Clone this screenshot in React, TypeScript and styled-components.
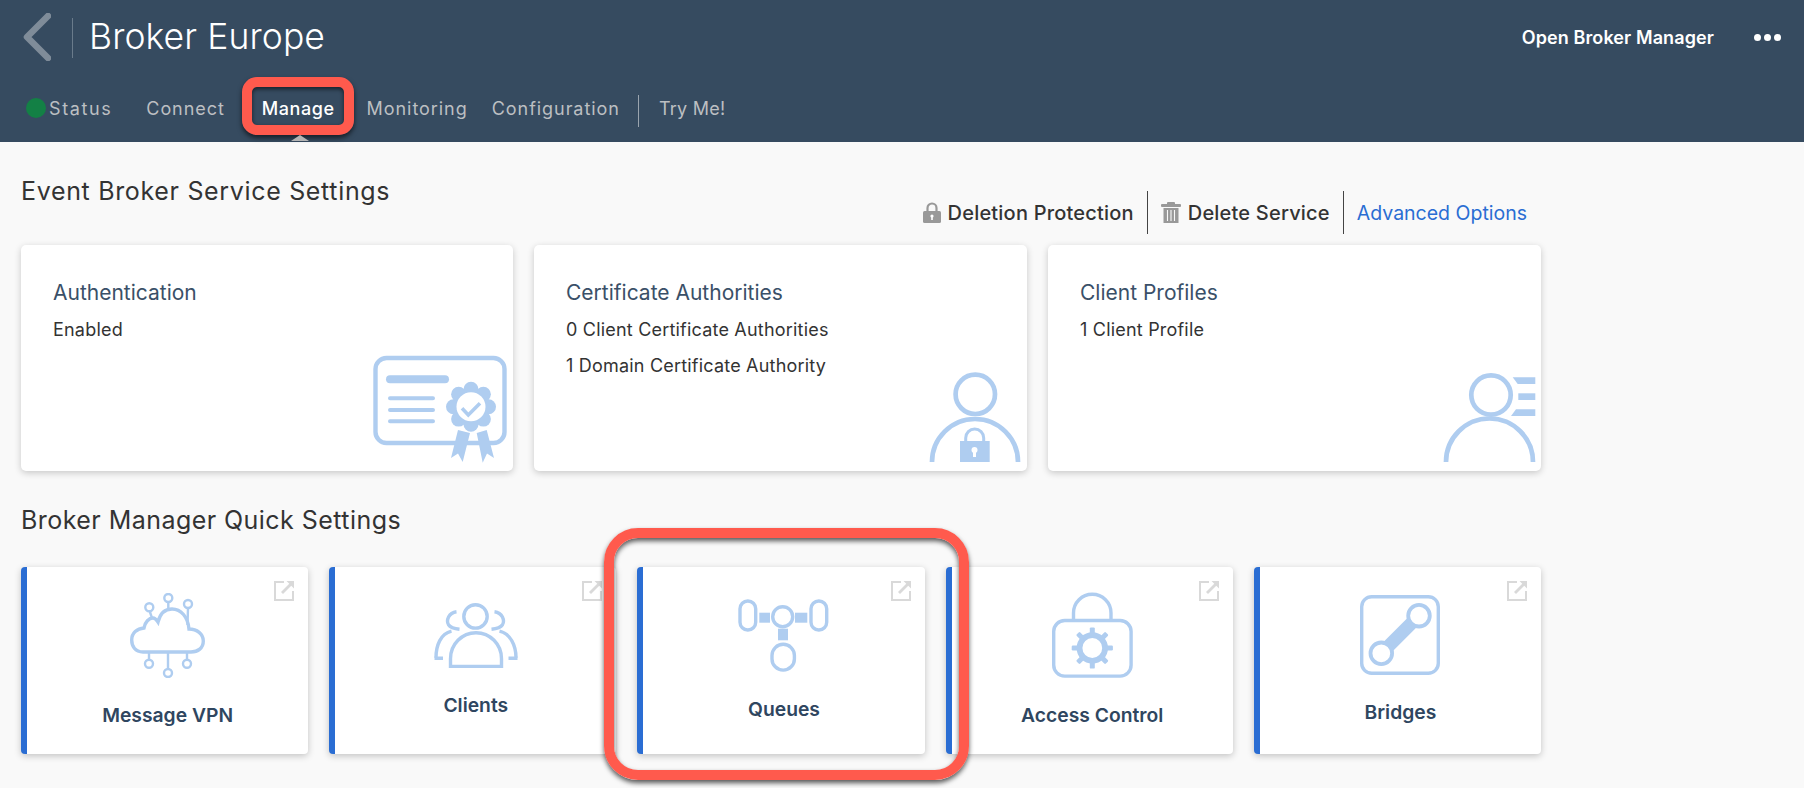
import React from 'react'
import styled, { createGlobalStyle } from 'styled-components'

const ICON = '#afcdf0'
const FONT = `Inter, "Noto Sans", "Liberation Sans", sans-serif`

const GlobalStyle = createGlobalStyle`
  html, body {
    margin: 0;
    padding: 0;
    background: #f9f9f9;
    font-family: ${FONT};
    overflow: hidden;
  }
`

const Page = styled.div`
  width: 1804px;
  height: 788px;
  overflow: hidden;
`

const Header = styled.header`
  height: 142px;
  box-sizing: border-box;
  background: #364b60;
  padding: 13px 23px 0 23px;
`

const TopRow = styled.div`
  display: flex;
  align-items: flex-start;
  height: 78px;
`

const BackButton = styled.svg`
  width: 28px;
  height: 48px;
  display: block;
`

const TitleDivider = styled.div`
  width: 1px;
  height: 40px;
  margin: 5px 17px 0 21px;
  background: #6a7b8b;
`

const Title = styled.h1`
  margin: 0;
  font-size: 35.5px;
  line-height: 40px;
  margin-top: 4px;
  margin-left: -1px;
  font-weight: 300;
  color: #fff;
  letter-spacing: 0.1px;
`

const OpenManager = styled.a`
  margin-left: auto;
  margin-top: 14px;
  font-size: 18px;
  line-height: 22px;
  font-weight: 600;
  letter-spacing: 0.1px;
  color: #fff;
`

const MoreDots = styled.div`
  display: flex;
  gap: 3px;
  margin: 21px 0 0 40px;
  span {
    width: 7px;
    height: 7px;
    border-radius: 50%;
    background: #fff;
  }
`

const TabRow = styled.nav`
  display: flex;
  align-items: center;
  height: 26px;
  margin-top: 5px;
`

const StatusDot = styled.span`
  width: 20px;
  height: 20px;
  margin: 0 3px 3px 3px;
  border-radius: 50%;
  background: #138045;
`

const Tab = styled.a<{ $active?: boolean; $left: number; $spacing?: number }>`
  position: relative;
  margin-left: ${(p) => p.$left}px;
  font-size: 18px;
  line-height: 26px;
  font-weight: ${(p) => (p.$active ? 500 : 400)};
  letter-spacing: ${(p) => p.$spacing ?? 0.95}px;
  color: ${(p) => (p.$active ? '#fff' : '#bcbfc2')};
`

const TabHighlight = styled.span`
  position: absolute;
  left: -20px;
  right: -19px;
  top: -19px;
  bottom: -13px;
  box-sizing: border-box;
  border: 10px solid #ff5a4d;
  border-radius: 15px;
  box-shadow: 0 3px 5px rgba(0, 0, 0, 0.6), inset 0 2px 4px rgba(0, 0, 0, 0.6);
`

const TabCaret = styled.span`
  position: absolute;
  left: 29px;
  top: 39px;
  width: 0;
  height: 0;
  border-left: 9px solid transparent;
  border-right: 9px solid transparent;
  border-bottom: 6px solid #b4b4b4;
`

const TabDivider = styled.span`
  width: 1px;
  height: 32px;
  margin: 4px 0 0 18px;
  background: #9aa4ae;
`

const Main = styled.main`
  width: 1520px;
  margin-left: 21px;
`

const SectionHead = styled.div`
  display: flex;
  justify-content: space-between;
  align-items: flex-start;
  padding: 34px 14px 11px 0;
`

const SectionTitle = styled.h2`
  margin: 0;
  font-size: 25px;
  line-height: 30px;
  font-weight: 400;
  letter-spacing: 0.67px;
  color: #333;
`

const QuickTitle = styled(SectionTitle)`
  margin: 34px 0 32px;
  letter-spacing: 0.45px;
`

const Actions = styled.div`
  display: flex;
  align-items: center;
  height: 43px;
  margin-top: 15px;
`

const Action = styled.a`
  display: flex;
  align-items: center;
  gap: 7px;
  font-size: 20px;
  font-weight: 500;
  letter-spacing: 0.2px;
  color: #333;
`

const ActionDivider = styled.span`
  width: 1px;
  height: 43px;
  margin: 0 13px;
  background: #444;
`

const AdvancedLink = styled.a`
  font-size: 19.5px;
  color: #2a6dd3;
`

const SettingsGrid = styled.div`
  display: grid;
  grid-template-columns: 492px 493px 493px;
  gap: 21px;
`

const SettingCard = styled.div`
  position: relative;
  height: 226px;
  box-sizing: border-box;
  padding: 34px 32px 0;
  background: #fff;
  border-radius: 5px;
  box-shadow: 0 2px 7px rgba(0, 0, 0, 0.2);
`

const CardTitle = styled.div`
  font-size: 21px;
  line-height: 28px;
  margin-bottom: 5px;
  color: #3a5068;
`

const CardLine = styled.div`
  font-size: 18px;
  line-height: 36px;
  letter-spacing: 0.2px;
  color: #333;
`

const CardArt = styled.svg<{ $right: number; $bottom: number }>`
  position: absolute;
  right: ${(p) => p.$right}px;
  bottom: ${(p) => p.$bottom}px;
  display: block;
`

const QuickGrid = styled.div`
  display: grid;
  grid-template-columns: repeat(5, 1fr);
  gap: 21px;
`

const QuickCard = styled.div`
  position: relative;
  height: 187px;
  box-sizing: border-box;
  display: flex;
  flex-direction: column;
  align-items: center;
  justify-content: center;
  gap: 23px;
  background: #fff;
  border-left: 6px solid #2a6dd3;
  border-radius: 4px;
  box-shadow: 0 2px 7px rgba(0, 0, 0, 0.22);
`

const QuickLabel = styled.div`
  font-size: 19.3px;
  line-height: 28px;
  font-weight: 600;
  color: #2f4660;
`

const QuickIcon = styled.svg`
  display: block;
`

const ExternalIcon = styled.svg`
  position: absolute;
  top: 14px;
  right: 14px;
  width: 20px;
  height: 20px;
`

const CardHighlight = styled.div`
  position: absolute;
  left: -39px;
  right: -44px;
  top: -39px;
  bottom: -26px;
  z-index: 2;
  box-sizing: border-box;
  border: 10px solid #ff5a4d;
  border-radius: 34px;
  box-shadow: 0 3px 5px rgba(0, 0, 0, 0.65), inset 0 3px 5px rgba(0, 0, 0, 0.65);
`

const External = () => (
  <ExternalIcon viewBox="0 0 20 20" fill="none">
    <path d="M10 1H1V19H19V10" stroke="#d9d9d9" strokeWidth="2" />
    <path d="M8 12L17 3" stroke="#d9d9d9" strokeWidth="2.8" />
    <path d="M12.5 0H20V7.5Z" fill="#d9d9d9" />
  </ExternalIcon>
)

const SmallLock = () => (
  <svg width="18" height="21" viewBox="0 0 18 21">
    <path d="M4.5 10V6a4.5 4.5 0 0 1 9 0v4" fill="none" stroke="#999" strokeWidth="2.2" />
    <rect x="0" y="9" width="18" height="12" rx="1.5" fill="#999" />
    <circle cx="9" cy="14" r="1.6" fill="#fff" />
    <rect x="8.2" y="14" width="1.6" height="4" fill="#fff" />
  </svg>
)

const SmallTrash = () => (
  <svg width="20" height="21" viewBox="0 0 20 21">
    <rect x="0" y="2" width="20" height="3" rx="1" fill="#999" />
    <rect x="6" y="0" width="8" height="3" rx="1" fill="#999" />
    <path d="M2.5 6H17.5V21H2.5Z" fill="#999" />
    <path d="M6.5 8V19M10 8V19M13.5 8V19" stroke="#f9f9f9" strokeWidth="1.1" />
  </svg>
)

const CertificateArt = () => (
  <CardArt $right={6} $bottom={8} width="134" height="108" viewBox="33 15 134 108">
    <rect x="35.5" y="18" width="129" height="85" rx="11" fill="none" stroke={ICON} strokeWidth="4.4" />
    <rect x="46" y="35.3" width="63" height="8" rx="4" fill={ICON} />
    <path d="M50 58.3H93M50 70H93M50 81.3H93" stroke={ICON} strokeWidth="4" strokeLinecap="round" />
    <circle cx="131" cy="66.7" r="30" fill="#fff" />
    <path d="M118 90L130 93L122.7 122L118 113.5L111 118Z" fill={ICON} />
    <path d="M136.7 93L146.7 90L154 118L147 113.5L142.7 122.7Z" fill={ICON} />
    <circle cx="131" cy="66.7" r="18" fill={ICON} />
    {[0, 45, 90, 135, 180, 225, 270, 315].map((a) => (
      <circle key={a} cx={131 + 17.5 * Math.cos((a * Math.PI) / 180)} cy={66.7 + 17.5 * Math.sin((a * Math.PI) / 180)} r="7.5" fill={ICON} />
    ))}
    <circle cx="131" cy="66.7" r="14.5" fill="#fff" />
    <path d="M122 68.3L128.3 75L140 63.3" fill="none" stroke={ICON} strokeWidth="3.6" />
  </CardArt>
)

const UserLockArt = () => (
  <CardArt $right={5} $bottom={8} width="94" height="93" viewBox="27 10 94 93">
    <circle cx="74.3" cy="34.3" r="19.7" fill="none" stroke={ICON} strokeWidth="4.7" />
    <path d="M31 102A43 43 0 0 1 117 102" fill="none" stroke={ICON} strokeWidth="4.7" />
    <path d="M64.7 82V78A9 9 0 0 1 82.7 78V82" fill="none" stroke={ICON} strokeWidth="3" />
    <rect x="59" y="81" width="29.7" height="21" fill={ICON} />
    <circle cx="73.5" cy="90" r="3" fill="#fff" />
    <rect x="72" y="90" width="3" height="7" fill="#fff" />
  </CardArt>
)

const UserListArt = () => (
  <CardArt $right={4} $bottom={7} width="96" height="92" viewBox="20 12 96 92">
    <circle cx="70" cy="35" r="19.7" fill="none" stroke={ICON} strokeWidth="4.7" />
    <path d="M25 102A43.5 43.5 0 0 1 112 102" fill="none" stroke={ICON} strokeWidth="4.7" />
    <path d="M91.7 17.3H114.3V24H96.7Z" fill={ICON} />
    <path d="M97.3 33.3H114.3V40H97.3Z" fill={ICON} />
    <path d="M95 49.3H114.3V56H90Z" fill={ICON} />
  </CardArt>
)

const CloudIcon = () => (
  <QuickIcon width="75" height="85" viewBox="130 42 75 85" fill="none" stroke={ICON} strokeWidth="3.4">
    <path d="M143 101C135 101 131.7 95 131.7 89C131.7 82 137 77.5 144 77C145 71 149 67 153 67C155 67 156 68 158 71C160 63 165 58 172 58C181 58 188 66 189 78C197 78 203.3 83 203.3 90C203.3 97 198 101 191 101Z" />
    <g strokeWidth="2.4">
      <circle cx="168.3" cy="47" r="4" />
      <circle cx="149.3" cy="56.3" r="4" />
      <circle cx="188" cy="53" r="4" />
      <circle cx="149" cy="112.7" r="4" />
      <circle cx="168" cy="122" r="4" />
      <circle cx="187" cy="112.7" r="4" />
      <path d="M168.3 51V58M149.8 60.5L152 67M188 57L187.5 74M149 101V108.5M168 101V118M187 101V108.5" />
    </g>
  </QuickIcon>
)

const ClientsIcon = () => (
  <QuickIcon width="84" height="65" viewBox="113.5 52.3 84 65" fill="none" stroke={ICON} strokeWidth="3.4">
    <circle cx="155" cy="65.7" r="11.7" />
    <path d="M130 115.7V108A25.5 26 0 0 1 181 108V115.7Z" />
    <path d="M136 61C128 62 125.5 70 128 74C130 77 134 78 139 78.5" />
    <path d="M174 61C182 62 184.5 70 182 74C180 77 176 78 171 78.5" />
    <path d="M131 80.5C120 83 115.5 95 115.5 107" />
    <path d="M179 80.5C190 83 195.5 95 195.5 107" />
    <path d="M114 107.5H122.5M188 107.5H197" />
  </QuickIcon>
)

const QueuesIcon = () => (
  <QuickIcon width="91" height="73" viewBox="138 78 91 73" fill="none" stroke={ICON} strokeWidth="3.4">
    <rect x="140" y="80" width="15.7" height="29" rx="7.8" />
    <rect x="211" y="80" width="15.7" height="29" rx="7.8" />
    <circle cx="182.7" cy="95.7" r="10" />
    <rect x="172" y="123.3" width="22.4" height="25.8" rx="11.2" />
    <g fill={ICON} stroke="none">
      <rect x="159.3" y="91.7" width="10.7" height="10" />
      <rect x="195" y="91.7" width="12.3" height="10" />
      <rect x="178" y="107.7" width="10" height="11.6" />
    </g>
  </QuickIcon>
)

const AccessIcon = () => (
  <QuickIcon width="81" height="86" viewBox="111 41 81 86" fill="none" stroke={ICON} strokeWidth="3.4">
    <rect x="112.7" y="69.5" width="77.4" height="55.6" rx="11" />
    <path d="M132.5 69V62A18.7 18.7 0 0 1 170 62V69" />
    <circle cx="151.3" cy="97" r="12.8" strokeWidth="5.8" />
    {[0, 45, 90, 135, 180, 225, 270, 315].map((a) => (
      <rect key={a} x="148.8" y="76.4" width="5" height="8" rx="1.2" fill={ICON} stroke="none" transform={`rotate(${a} 151.3 97)`} />
    ))}
  </QuickIcon>
)

const BridgesIcon = () => (
  <QuickIcon width="80" height="80" viewBox="121 45 80 80" fill="none" stroke={ICON} strokeWidth="3.4">
    <rect x="122.7" y="46.7" width="76.6" height="76.6" rx="10" />
    <path d="M180 65.7L142.3 103.3" strokeWidth="13" />
    <circle cx="180" cy="65.7" r="10.8" fill="#fff" strokeWidth="3.8" />
    <circle cx="142.3" cy="103.3" r="10.8" fill="#fff" strokeWidth="3.8" />
  </QuickIcon>
)

const tabs = [
  { label: 'Connect', left: 34 },
  { label: 'Manage', left: 37, active: true, spacing: 0.55 },
  { label: 'Monitoring', left: 32 },
  { label: 'Configuration', left: 24 },
]

const quick = [
  { label: 'Message VPN', icon: <CloudIcon /> },
  { label: 'Clients', icon: <ClientsIcon /> },
  { label: 'Queues', icon: <QueuesIcon />, marked: true },
  { label: 'Access Control', icon: <AccessIcon /> },
  { label: 'Bridges', icon: <BridgesIcon /> },
]

const App: React.FC = () => {
  return (
    <Page>
      <GlobalStyle />
      <Header>
        <TopRow>
          <BackButton viewBox="0 0 28 48" fill="none">
            <path d="M25 3L4 24L25 45" stroke="#7f8c99" strokeWidth="6.5" strokeLinecap="round" strokeLinejoin="round" />
          </BackButton>
          <TitleDivider />
          <Title>Broker Europe</Title>
          <OpenManager>Open Broker Manager</OpenManager>
          <MoreDots>
            <span />
            <span />
            <span />
          </MoreDots>
        </TopRow>
        <TabRow>
          <StatusDot />
          <Tab $left={0} $spacing={1.6}>Status</Tab>
          {tabs.map((t) => (
            <Tab key={t.label} $left={t.left} $active={t.active} $spacing={t.spacing}>
              {t.label}
              {t.active && (
                <>
                  <TabHighlight />
                  <TabCaret />
                </>
              )}
            </Tab>
          ))}
          <TabDivider />
          <Tab $left={20} $spacing={0.25}>Try Me!</Tab>
        </TabRow>
      </Header>
      <Main>
        <SectionHead>
          <SectionTitle>Event Broker Service Settings</SectionTitle>
          <Actions>
            <Action>
              <SmallLock />
              Deletion Protection
            </Action>
            <ActionDivider />
            <Action>
              <SmallTrash />
              Delete Service
            </Action>
            <ActionDivider />
            <AdvancedLink>Advanced Options</AdvancedLink>
          </Actions>
        </SectionHead>
        <SettingsGrid>
          <SettingCard>
            <CardTitle>Authentication</CardTitle>
            <CardLine>Enabled</CardLine>
            <CertificateArt />
          </SettingCard>
          <SettingCard>
            <CardTitle>Certificate Authorities</CardTitle>
            <CardLine>0 Client Certificate Authorities</CardLine>
            <CardLine>1 Domain Certificate Authority</CardLine>
            <UserLockArt />
          </SettingCard>
          <SettingCard>
            <CardTitle>Client Profiles</CardTitle>
            <CardLine>1 Client Profile</CardLine>
            <UserListArt />
          </SettingCard>
        </SettingsGrid>
        <QuickTitle>Broker Manager Quick Settings</QuickTitle>
        <QuickGrid>
          {quick.map((q) => (
            <QuickCard key={q.label}>
              <External />
              {q.icon}
              <QuickLabel>{q.label}</QuickLabel>
              {q.marked && <CardHighlight />}
            </QuickCard>
          ))}
        </QuickGrid>
      </Main>
    </Page>
  )
}

export default App
